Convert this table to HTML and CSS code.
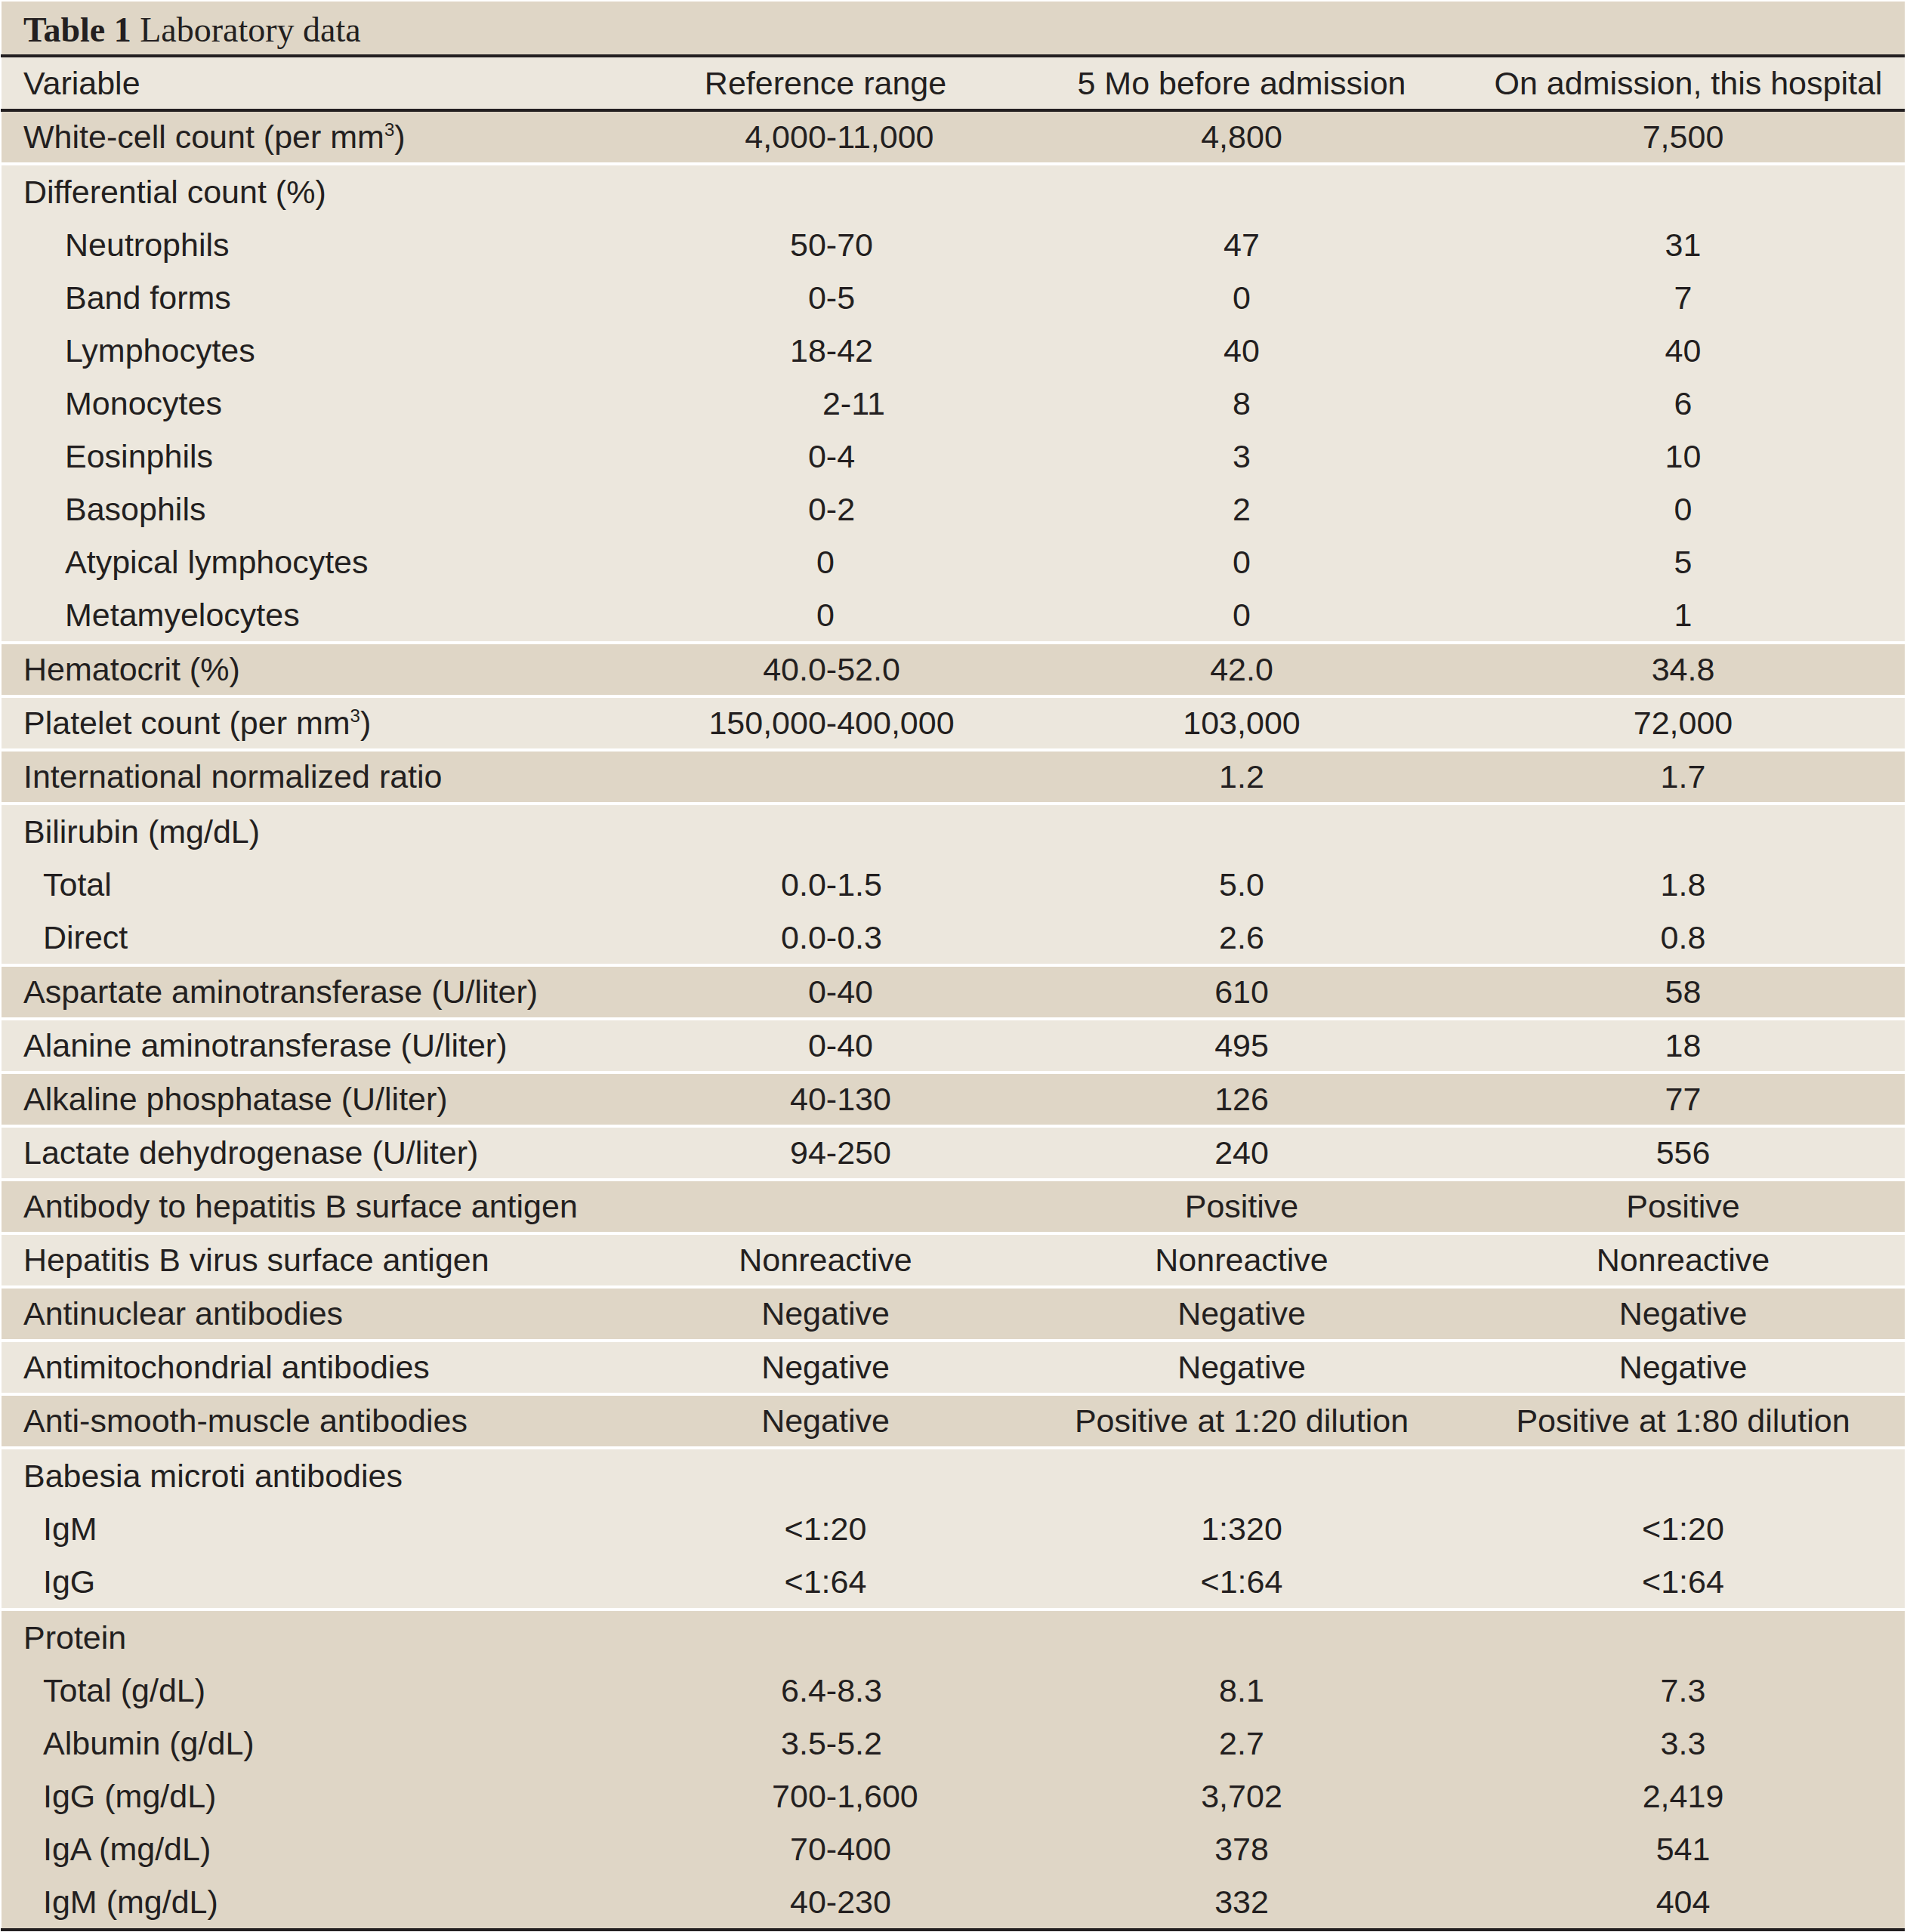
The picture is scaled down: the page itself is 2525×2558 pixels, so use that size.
FILE: index.html
```html
<!DOCTYPE html>
<html lang="en">
<head>
<meta charset="utf-8">
<title>Table 1 Laboratory data</title>
<link rel="stylesheet" href="styles.css">
</head>
<body>
<div class="table">
  <div class="title"><b>Table 1</b> Laboratory data</div>
  <div class="rule"></div>
  <div class="row head">
    <div class="c1">Variable</div><div class="c">Reference range</div><div class="c">5 Mo before admission</div><div class="c c4 h4">On admission, this hospital</div>
  </div>
  <div class="rule"></div>

  <div class="group dark single">
    <div class="row"><div class="c1">White-cell count (per mm<sup>3</sup>)</div><div class="c rng"><span class="l">4,000</span><span>-</span><span class="r">11,000</span></div><div class="c">4,800</div><div class="c c4">7,500</div></div>
  </div>
  <div class="group light">
    <div class="row"><div class="c1">Differential count (%)</div><div class="c"></div><div class="c"></div><div class="c c4"></div></div>
    <div class="row"><div class="c1 ind2">Neutrophils</div><div class="c rng"><span class="l">50</span><span>-</span><span class="r">70</span></div><div class="c">47</div><div class="c c4">31</div></div>
    <div class="row"><div class="c1 ind2">Band forms</div><div class="c rng"><span class="l">0</span><span>-</span><span class="r">5</span></div><div class="c">0</div><div class="c c4">7</div></div>
    <div class="row"><div class="c1 ind2">Lymphocytes</div><div class="c rng"><span class="l">18</span><span>-</span><span class="r">42</span></div><div class="c">40</div><div class="c c4">40</div></div>
    <div class="row"><div class="c1 ind2">Monocytes</div><div class="c rng off"><span class="l">2</span><span>-</span><span class="r">11</span></div><div class="c">8</div><div class="c c4">6</div></div>
    <div class="row"><div class="c1 ind2">Eosinphils</div><div class="c rng"><span class="l">0</span><span>-</span><span class="r">4</span></div><div class="c">3</div><div class="c c4">10</div></div>
    <div class="row"><div class="c1 ind2">Basophils</div><div class="c rng"><span class="l">0</span><span>-</span><span class="r">2</span></div><div class="c">2</div><div class="c c4">0</div></div>
    <div class="row"><div class="c1 ind2">Atypical lymphocytes</div><div class="c">0</div><div class="c">0</div><div class="c c4">5</div></div>
    <div class="row"><div class="c1 ind2">Metamyelocytes</div><div class="c">0</div><div class="c">0</div><div class="c c4">1</div></div>
  </div>
  <div class="group dark single">
    <div class="row"><div class="c1">Hematocrit (%)</div><div class="c rng"><span class="l">40.0</span><span>-</span><span class="r">52.0</span></div><div class="c">42.0</div><div class="c c4">34.8</div></div>
  </div>
  <div class="group light single">
    <div class="row"><div class="c1">Platelet count (per mm<sup>3</sup>)</div><div class="c rng"><span class="l">150,000</span><span>-</span><span class="r">400,000</span></div><div class="c">103,000</div><div class="c c4">72,000</div></div>
  </div>
  <div class="group dark single">
    <div class="row"><div class="c1">International normalized ratio</div><div class="c"></div><div class="c">1.2</div><div class="c c4">1.7</div></div>
  </div>
  <div class="group light">
    <div class="row"><div class="c1">Bilirubin (mg/dL)</div><div class="c"></div><div class="c"></div><div class="c c4"></div></div>
    <div class="row"><div class="c1 ind1">Total</div><div class="c rng"><span class="l">0.0</span><span>-</span><span class="r">1.5</span></div><div class="c">5.0</div><div class="c c4">1.8</div></div>
    <div class="row"><div class="c1 ind1">Direct</div><div class="c rng"><span class="l">0.0</span><span>-</span><span class="r">0.3</span></div><div class="c">2.6</div><div class="c c4">0.8</div></div>
  </div>
  <div class="group dark single">
    <div class="row"><div class="c1">Aspartate aminotransferase (U/liter)</div><div class="c rng"><span class="l">0</span><span>-</span><span class="r">40</span></div><div class="c">610</div><div class="c c4">58</div></div>
  </div>
  <div class="group light single">
    <div class="row"><div class="c1">Alanine aminotransferase (U/liter)</div><div class="c rng"><span class="l">0</span><span>-</span><span class="r">40</span></div><div class="c">495</div><div class="c c4">18</div></div>
  </div>
  <div class="group dark single">
    <div class="row"><div class="c1">Alkaline phosphatase (U/liter)</div><div class="c rng"><span class="l">40</span><span>-</span><span class="r">130</span></div><div class="c">126</div><div class="c c4">77</div></div>
  </div>
  <div class="group light single">
    <div class="row"><div class="c1">Lactate dehydrogenase (U/liter)</div><div class="c rng"><span class="l">94</span><span>-</span><span class="r">250</span></div><div class="c">240</div><div class="c c4">556</div></div>
  </div>
  <div class="group dark single">
    <div class="row"><div class="c1">Antibody to hepatitis B surface antigen</div><div class="c"></div><div class="c">Positive</div><div class="c c4">Positive</div></div>
  </div>
  <div class="group light single">
    <div class="row"><div class="c1">Hepatitis B virus surface antigen</div><div class="c">Nonreactive</div><div class="c">Nonreactive</div><div class="c c4">Nonreactive</div></div>
  </div>
  <div class="group dark single">
    <div class="row"><div class="c1">Antinuclear antibodies</div><div class="c">Negative</div><div class="c">Negative</div><div class="c c4">Negative</div></div>
  </div>
  <div class="group light single">
    <div class="row"><div class="c1">Antimitochondrial antibodies</div><div class="c">Negative</div><div class="c">Negative</div><div class="c c4">Negative</div></div>
  </div>
  <div class="group dark single">
    <div class="row"><div class="c1">Anti-smooth-muscle antibodies</div><div class="c">Negative</div><div class="c">Positive at 1:20 dilution</div><div class="c c4">Positive at 1:80 dilution</div></div>
  </div>
  <div class="group light">
    <div class="row"><div class="c1">Babesia microti antibodies</div><div class="c"></div><div class="c"></div><div class="c c4"></div></div>
    <div class="row"><div class="c1 ind1">IgM</div><div class="c">&lt;1:20</div><div class="c">1:320</div><div class="c c4">&lt;1:20</div></div>
    <div class="row"><div class="c1 ind1">IgG</div><div class="c">&lt;1:64</div><div class="c">&lt;1:64</div><div class="c c4">&lt;1:64</div></div>
  </div>
  <div class="group dark">
    <div class="row"><div class="c1">Protein</div><div class="c"></div><div class="c"></div><div class="c c4"></div></div>
    <div class="row"><div class="c1 ind1">Total (g/dL)</div><div class="c rng"><span class="l">6.4</span><span>-</span><span class="r">8.3</span></div><div class="c">8.1</div><div class="c c4">7.3</div></div>
    <div class="row"><div class="c1 ind1">Albumin (g/dL)</div><div class="c rng"><span class="l">3.5</span><span>-</span><span class="r">5.2</span></div><div class="c">2.7</div><div class="c c4">3.3</div></div>
    <div class="row"><div class="c1 ind1">IgG (mg/dL)</div><div class="c rng"><span class="l">700</span><span>-</span><span class="r">1,600</span></div><div class="c">3,702</div><div class="c c4">2,419</div></div>
    <div class="row"><div class="c1 ind1">IgA (mg/dL)</div><div class="c rng"><span class="l">70</span><span>-</span><span class="r">400</span></div><div class="c">378</div><div class="c c4">541</div></div>
    <div class="row"><div class="c1 ind1">IgM (mg/dL)</div><div class="c rng"><span class="l">40</span><span>-</span><span class="r">230</span></div><div class="c">332</div><div class="c c4">404</div></div>
  </div>
  <div class="rule"></div>
</div>
</body>
</html>
```
FILE: styles.css
```css
html, body {
  margin: 0;
  padding: 0;
  background: #ffffff;
}

body {
  width: 2525px;
  height: 2558px;
  overflow: hidden;
  font-family: "Liberation Sans", Arial, sans-serif;
  color: #231f20;
}

.table {
  margin: 2px 3px 0 2px;
  display: flex;
  flex-direction: column;
}

.title {
  height: 70px;
  box-sizing: border-box;
  padding: 6px 0 0 29px;
  background: #dfd6c6;
  font-family: "Liberation Serif", "Times New Roman", serif;
  font-size: 46px;
  line-height: 64px;
  white-space: nowrap;
}

.title b {
  font-weight: bold;
}

.rule {
  height: 4px;
  background: #231f20;
  margin-left: -1px;
}

.row {
  display: grid;
  grid-template-columns: 823px 536px 566px 595px;
  height: 70px;
  align-items: center;
  font-size: 43px;
  line-height: 1;
}

.head {
  height: 68px;
  background: #ece7dd;
}

.group {
  display: flex;
  flex-direction: column;
}

.group + .group {
  margin-top: 4px;
}

.group.single .row {
  height: 67px;
}

.dark {
  background: #dfd6c6;
}

.light {
  background: #ece7dd;
}

.c1 {
  padding-left: 29px;
  white-space: nowrap;
}

.c1.ind1 {
  padding-left: 55px;
}

.c1.ind2 {
  padding-left: 84px;
}

.c {
  text-align: center;
  white-space: nowrap;
}

.c4 {
  padding-left: 8px;
}

.c4.h4 {
  padding-left: 22px;
}

.rng {
  display: grid;
  grid-template-columns: 1fr auto 1fr;
  padding-left: 16px;
}

.rng.off {
  padding-left: 54px;
}

.rng .l {
  text-align: right;
}

.rng .r {
  text-align: left;
}

sup {
  font-size: 24px;
  vertical-align: 16px;
  line-height: 0;
}
```
